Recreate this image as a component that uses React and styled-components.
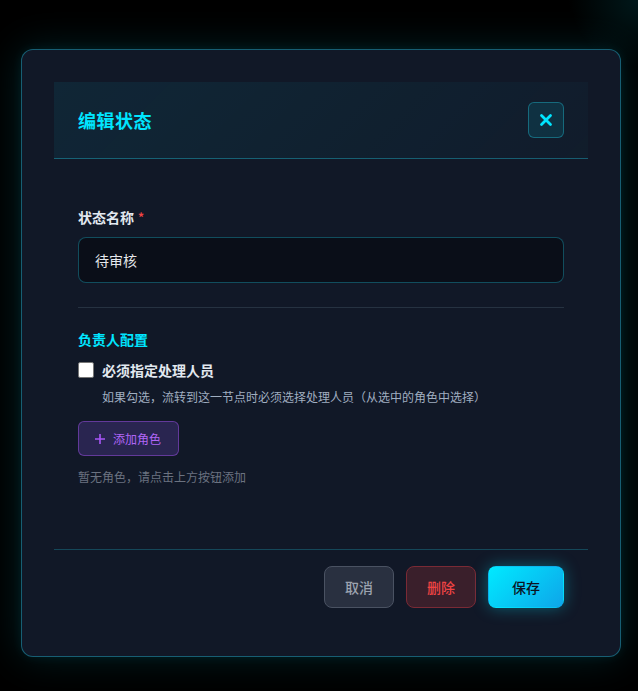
import React from "react";
import styled, { createGlobalStyle } from "styled-components";

const Global = createGlobalStyle`
  html, body { margin: 0; padding: 0; }
  body {
    background: radial-gradient(circle at 100% 0%, rgba(0, 229, 255, 0.10) 0px, rgba(0,229,255,0) 70px), #000;
    font-family: "Noto Sans CJK SC", "Noto Sans", sans-serif;
    min-height: 691px;
  }
  * { box-sizing: border-box; }
`;

const Overlay = styled.div`
  padding: 49px 0 0 21px;
  height: 691px;
`;

const Modal = styled.div`
  width: 600px;
  background: #111827;
  border: 1px solid rgba(34, 211, 238, 0.38);
  border-radius: 12px;
  padding: 32px;
  box-shadow: 0 0 40px rgba(0, 229, 255, 0.14), 0 0 12px rgba(0, 229, 255, 0.08);
`;

const Header = styled.div`
  height: 77px;
  display: flex;
  align-items: center;
  justify-content: space-between;
  padding: 0 24px;
  background: linear-gradient(135deg, rgba(0, 229, 255, 0.07), rgba(0, 229, 255, 0.02));
  border-bottom: 1px solid rgba(34, 211, 238, 0.35);
`;

const Title = styled.h2`
  margin: 0;
  font-size: 18px;
  font-weight: 700;
  letter-spacing: 0.5px;
  color: #00e5ff;
  line-height: 24px;
`;

const CloseButton = styled.button`
  width: 36px;
  height: 36px;
  border-radius: 6px;
  border: 1px solid rgba(34, 211, 238, 0.35);
  background: rgba(0, 229, 255, 0.1);
  display: flex;
  align-items: center;
  justify-content: center;
  padding: 0;
  color: #00e5ff;
`;

const Body = styled.div`
  padding: 48px 24px 63px;
`;

const Label = styled.label`
  display: block;
  font-size: 14px;
  line-height: 20px;
  font-weight: 700;
  color: #e2e8f0;
`;

const Required = styled.span`
  color: #ef4444;
  margin-left: 4px;
  font-size: 12px;
  vertical-align: top;
`;

const Input = styled.input`
  display: block;
  width: 100%;
  height: 46px;
  margin-top: 10px;
  padding: 0 16px;
  background: #0a0e18;
  border: 1px solid rgba(34, 211, 238, 0.32);
  border-radius: 8px;
  color: #e5e7eb;
  font-family: inherit;
  font-size: 14px;
  outline: none;
`;

const Divider = styled.hr`
  border: none;
  border-top: 1px solid #263241;
  margin: 24px 0 0;
`;

const SectionTitle = styled.h3`
  margin: 21px 0 0;
  font-size: 14px;
  line-height: 20px;
  font-weight: 700;
  color: #00e5ff;
`;

const CheckRow = styled.label`
  display: flex;
  align-items: center;
  gap: 8px;
  margin-top: 11px;
  font-size: 14px;
  line-height: 20px;
  font-weight: 700;
  color: #e2e8f0;
`;

const Box = styled.span`
  width: 16px;
  height: 16px;
  background: #fff;
  border: 1px solid #767676;
  border-radius: 2px;
  flex: none;
`;

const Hint = styled.p`
  margin: 8px 0 0 24px;
  font-size: 12px;
  line-height: 18px;
  color: #a0aec0;
`;

const AddButton = styled.button`
  margin-top: 15px;
  height: 35px;
  padding: 0 17px 0 15px;
  display: inline-flex;
  align-items: center;
  gap: 7px;
  background: rgba(139, 92, 246, 0.2);
  border: 1px solid rgba(168, 85, 247, 0.45);
  border-radius: 6px;
  color: #b065f7;
  font-family: inherit;
  font-size: 12px;
`;

const Empty = styled.p`
  margin: 12px 0 0;
  font-size: 12px;
  line-height: 18px;
  color: #6b7280;
`;

const Footer = styled.div`
  display: flex;
  justify-content: flex-end;
  gap: 12px;
  padding: 16px 24px;
  border-top: 1px solid rgba(34, 211, 238, 0.25);
`;

const variants = {
  cancel: `
    background: #293040;
    border: 1px solid #4a5262;
    color: #9ca3af;
  `,
  danger: `
    background: #3a1f2b;
    border: 1px solid #7a2a35;
    color: #ef4444;
  `,
  primary: `
    background: linear-gradient(135deg, #00eaff, #0ea5e9);
    border: 1px solid transparent;
    color: #0b1322;
    box-shadow: 0 0 16px rgba(0, 229, 255, 0.35);
  `,
};

const FooterButton = styled.button`
  height: 42px;
  width: ${(p) => p.$w}px;
  border-radius: 8px;
  font-family: inherit;
  font-size: 14px;
  font-weight: 500;
  padding: 0;
  ${(p) => variants[p.$variant]}
`;

export default function App() {
  return (
    <>
      <Global />
      <Overlay>
        <Modal>
          <Header>
            <Title>编辑状态</Title>
            <CloseButton aria-label="关闭">
              <svg width="14" height="14" viewBox="0 0 14 14" fill="none">
                <path d="M2.5 2.5 L11.5 11.5 M11.5 2.5 L2.5 11.5" stroke="#00e5ff" strokeWidth="2.8" strokeLinecap="round" />
              </svg>
            </CloseButton>
          </Header>
          <Body>
            <Label>
              状态名称<Required>*</Required>
            </Label>
            <Input defaultValue="待审核" />
            <Divider />
            <SectionTitle>负责人配置</SectionTitle>
            <CheckRow>
              <Box />
              必须指定处理人员
            </CheckRow>
            <Hint>如果勾选，流转到这一节点时必须选择处理人员（从选中的角色中选择）</Hint>
            <AddButton>
              <svg width="12" height="12" viewBox="0 0 12 12" fill="none">
                <path d="M6 1 V11 M1 6 H11" stroke="#a855f7" strokeWidth="1.6" />
              </svg>
              添加角色
            </AddButton>
            <Empty>暂无角色，请点击上方按钮添加</Empty>
          </Body>
          <Footer>
            <FooterButton $variant="cancel" $w={70}>取消</FooterButton>
            <FooterButton $variant="danger" $w={70}>删除</FooterButton>
            <FooterButton $variant="primary" $w={76}>保存</FooterButton>
          </Footer>
        </Modal>
      </Overlay>
    </>
  );
}
